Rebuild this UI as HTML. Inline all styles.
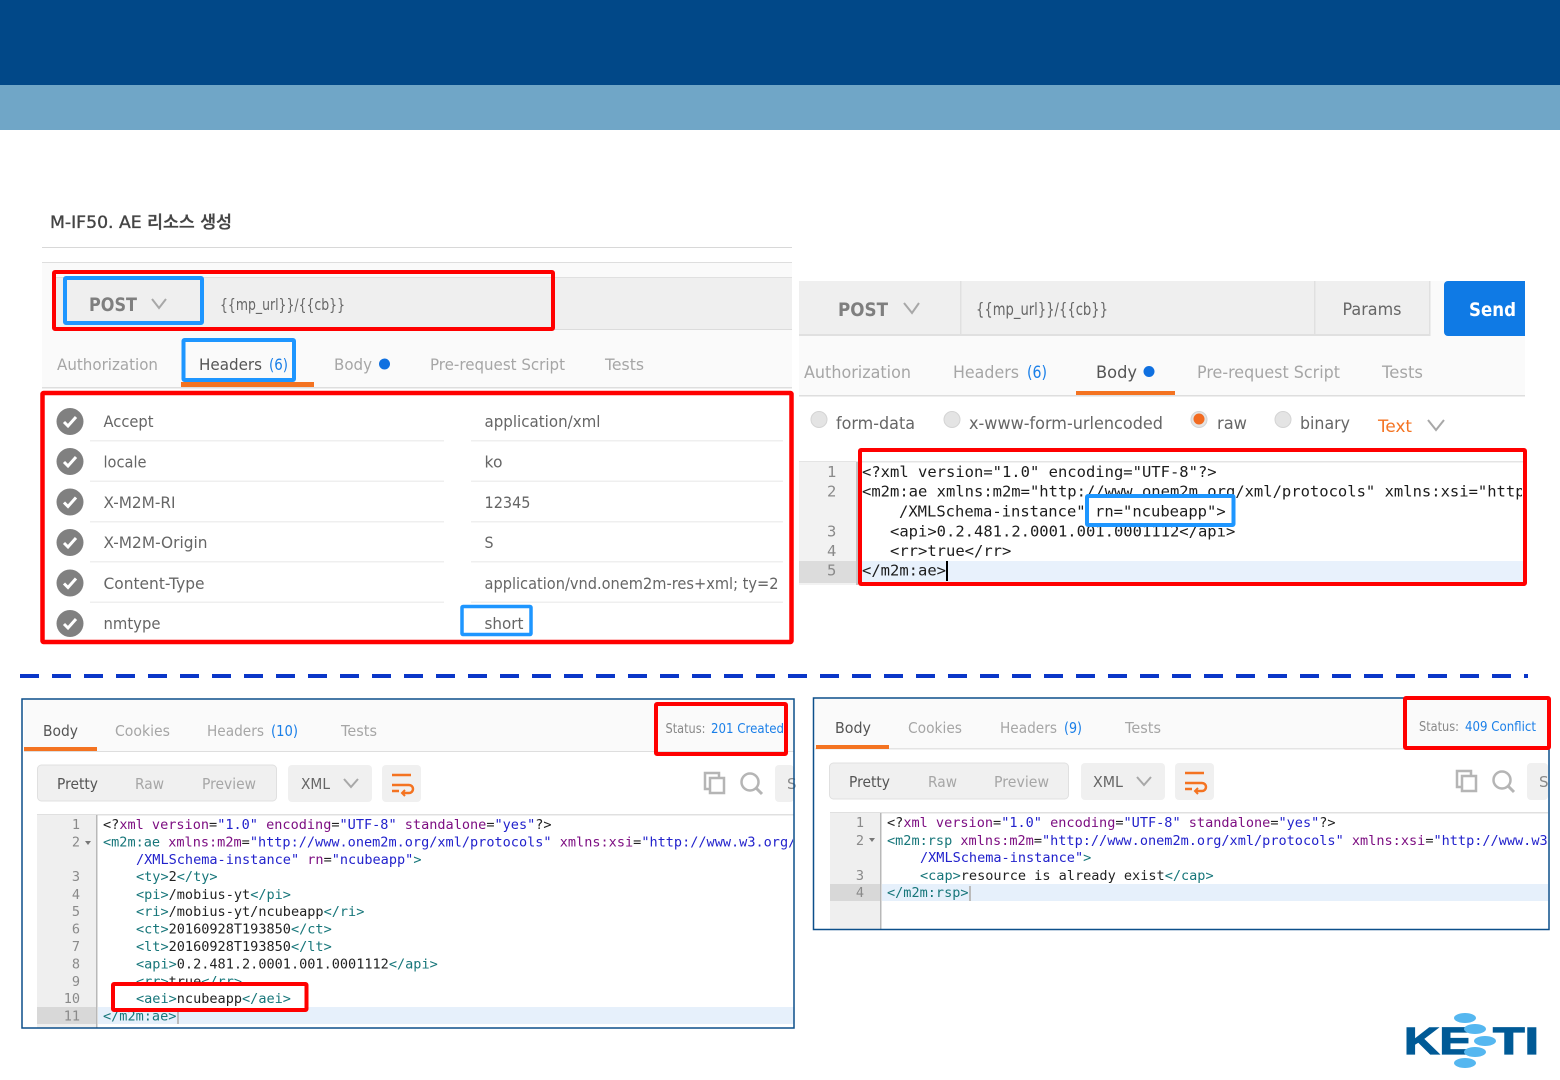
<!DOCTYPE html>
<html><head><meta charset="utf-8"><title>M-IF50</title>
<style>
html,body{margin:0;padding:0;background:#fff;width:1560px;height:1080px;overflow:hidden}
svg{display:block}
.u{font-family:"DejaVu Sans","Noto Sans CJK KR",sans-serif}
.c{font-family:"DejaVu Sans Mono","Liberation Mono",monospace;font-size:13.55px;white-space:pre}
.big{font-size:15.5px;fill:#1c1c1c}
.g{fill:#a3a3a3}.d{fill:#555}.b{fill:#1a7fe8}
.t{fill:#17767a}.a{fill:#7d0f82}.s{fill:#2222cc}.x{fill:#222}.n{fill:#8a8a8a}
.ch{fill:none;stroke:#a8a8a8;stroke-width:2}
</style></head><body>
<svg width="1560" height="1080" viewBox="0 0 1560 1080" xmlns="http://www.w3.org/2000/svg">
<defs>
<clipPath id="cr"><rect x="799" y="455" width="723" height="130"/></clipPath>
<clipPath id="cl"><rect x="22" y="760" width="771" height="267"/></clipPath>
<clipPath id="cb"><rect x="814" y="760" width="734" height="169"/></clipPath>
</defs>
<!-- header -->
<rect width="1560" height="85" fill="#014888"/>
<rect y="85" width="1560" height="45" fill="#70a6c7"/>

<!-- title -->
<text class="u" x="50" y="228" font-size="17" font-weight="500" fill="#444" stroke="#444" stroke-width="0.35" textLength="182" lengthAdjust="spacingAndGlyphs">M-IF50. AE 리소스 생성</text>
<rect x="42" y="247" width="750" height="1" fill="#d8d8d8"/>

<!-- left request panel -->
<rect x="42" y="262" width="750" height="125" fill="#fafafa"/>
<rect x="42" y="262" width="750" height="1" fill="#dedede"/>
<rect x="53" y="277" width="739" height="53" fill="#efefef"/>
<rect x="53" y="277" width="739" height="1" fill="#e0e0e0"/>
<rect x="53" y="329" width="739" height="1" fill="#dcdcdc"/>
<text class="u" x="89" y="311" font-size="19" font-weight="bold" fill="#7f7f7f" textLength="48" lengthAdjust="spacingAndGlyphs">POST</text>
<polyline class="ch" points="152,299 159,308 166,299"/>
<text class="u" x="220" y="310" font-size="16" fill="#666" textLength="125" lengthAdjust="spacingAndGlyphs">{{mp_url}}/{{cb}}</text>
<rect x="54" y="272" width="499" height="57" fill="none" stroke="#f00" stroke-width="4" rx="1"/>
<rect x="65" y="278" width="137" height="45" fill="none" stroke="#1e96ff" stroke-width="4" rx="1"/>

<text class="u" x="57" y="370" font-size="16" fill="#a6a6a6" textLength="101" lengthAdjust="spacingAndGlyphs">Authorization</text>
<text class="u" x="199" y="370" font-size="16" fill="#555" textLength="63" lengthAdjust="spacingAndGlyphs">Headers</text>
<text class="u" x="269" y="370" font-size="16" fill="#1a7fe8" textLength="19" lengthAdjust="spacingAndGlyphs">(6)</text>
<text class="u" x="334" y="370" font-size="16" fill="#a6a6a6" textLength="38" lengthAdjust="spacingAndGlyphs">Body</text>
<circle cx="384.500" cy="364" r="5.500" fill="#0f70e0"/>
<text class="u" x="430" y="370" font-size="16" fill="#a6a6a6" textLength="135" lengthAdjust="spacingAndGlyphs">Pre-request Script</text>
<text class="u" x="605" y="370" font-size="16" fill="#a6a6a6" textLength="39" lengthAdjust="spacingAndGlyphs">Tests</text>
<rect x="42" y="387" width="750" height="1.500" fill="#dedede"/>
<rect x="181" y="382" width="133" height="5" fill="#f47321"/>
<rect x="183.500" y="340" width="110.500" height="40" fill="none" stroke="#1e96ff" stroke-width="4" rx="1"/>

<!-- rows -->
<g fill="#808080">
<circle cx="70" cy="421.500" r="13.500"/><circle cx="70" cy="461.500" r="13.500"/><circle cx="70" cy="502" r="13.500"/><circle cx="70" cy="542.500" r="13.500"/><circle cx="70" cy="583" r="13.500"/><circle cx="70" cy="623.500" r="13.500"/>
</g>
<g fill="none" stroke="#fff" stroke-width="3">
<polyline points="64,422 68,426 76,417"/><polyline points="64,462 68,466 76,457"/><polyline points="64,502.500 68,506.500 76,497.500"/><polyline points="64,543 68,547 76,538"/><polyline points="64,583.500 68,587.500 76,578.500"/><polyline points="64,624 68,628 76,619"/>
</g>
<g fill="#efefef">
<rect x="90" y="440" width="354" height="1.500"/><rect x="471" y="440" width="312" height="1.500"/>
<rect x="90" y="480.500" width="354" height="1.500"/><rect x="471" y="480.500" width="312" height="1.500"/>
<rect x="90" y="521" width="354" height="1.500"/><rect x="471" y="521" width="312" height="1.500"/>
<rect x="90" y="561" width="354" height="1.500"/><rect x="471" y="561" width="312" height="1.500"/>
<rect x="90" y="601.500" width="354" height="1.500"/><rect x="471" y="601.500" width="312" height="1.500"/>
</g>
<g class="u" font-size="16" fill="#666">
<text x="103.500" y="427" textLength="50" lengthAdjust="spacingAndGlyphs">Accept</text>
<text x="103.500" y="467.500" textLength="43" lengthAdjust="spacingAndGlyphs">locale</text>
<text x="103.500" y="508" textLength="72" lengthAdjust="spacingAndGlyphs">X-M2M-RI</text>
<text x="103.500" y="548" textLength="104" lengthAdjust="spacingAndGlyphs">X-M2M-Origin</text>
<text x="103.500" y="589" textLength="101" lengthAdjust="spacingAndGlyphs">Content-Type</text>
<text x="103.500" y="629" textLength="57" lengthAdjust="spacingAndGlyphs">nmtype</text>
<text x="484.500" y="427" textLength="116" lengthAdjust="spacingAndGlyphs">application/xml</text>
<text x="484.500" y="467.500" textLength="18" lengthAdjust="spacingAndGlyphs">ko</text>
<text x="484.500" y="508" textLength="46" lengthAdjust="spacingAndGlyphs">12345</text>
<text x="484.500" y="548" textLength="9" lengthAdjust="spacingAndGlyphs">S</text>
<text x="484.500" y="589" textLength="294" lengthAdjust="spacingAndGlyphs">application/vnd.onem2m-res+xml; ty=2</text>
<text x="484.500" y="629" textLength="39" lengthAdjust="spacingAndGlyphs">short</text>
</g>
<rect x="42.500" y="393" width="749" height="249" fill="none" stroke="#f00" stroke-width="4.500" rx="1"/>
<rect x="462" y="606.500" width="69" height="28" fill="none" stroke="#1e96ff" stroke-width="3.500" rx="1"/>

<!-- right request panel -->
<rect x="799" y="281" width="726" height="115" fill="#fafafa"/>
<rect x="799" y="281" width="630" height="54" fill="#efefef"/>
<rect x="799" y="334" width="631" height="2" fill="#e0e0e0"/>
<rect x="1429" y="281" width="1.500" height="55" fill="#e0e0e0"/>
<rect x="960" y="281" width="1.500" height="54" fill="#e0e0e0"/>
<rect x="1314" y="281" width="1.500" height="54" fill="#e0e0e0"/>
<text class="u" x="838" y="316" font-size="19" font-weight="bold" fill="#7f7f7f" textLength="50" lengthAdjust="spacingAndGlyphs">POST</text>
<polyline class="ch" points="904,303 912,313 919,303"/>
<text class="u" x="976" y="315" font-size="17" fill="#666" textLength="132" lengthAdjust="spacingAndGlyphs">{{mp_url}}/{{cb}}</text>
<text class="u" x="1342.500" y="315" font-size="16.500" fill="#666" textLength="59" lengthAdjust="spacingAndGlyphs">Params</text>
<path d="M1525 281H1448a4 4 0 0 0-4 4v47a4 4 0 0 0 4 4h77z" fill="#0f7ae5"/>
<text class="u" x="1469" y="316" font-size="19" font-weight="bold" fill="#fff" textLength="47" lengthAdjust="spacingAndGlyphs">Send</text>

<text class="u" x="804" y="378" font-size="17" fill="#a6a6a6" textLength="107" lengthAdjust="spacingAndGlyphs">Authorization</text>
<text class="u" x="953" y="378" font-size="17" fill="#a6a6a6" textLength="66" lengthAdjust="spacingAndGlyphs">Headers</text>
<text class="u" x="1027" y="378" font-size="17" fill="#1a7fe8" textLength="20" lengthAdjust="spacingAndGlyphs">(6)</text>
<text class="u" x="1096" y="378" font-size="17" fill="#555" textLength="41" lengthAdjust="spacingAndGlyphs">Body</text>
<circle cx="1149" cy="371.500" r="5.500" fill="#0f70e0"/>
<text class="u" x="1197" y="378" font-size="17" fill="#a6a6a6" textLength="143" lengthAdjust="spacingAndGlyphs">Pre-request Script</text>
<text class="u" x="1382" y="378" font-size="17" fill="#a6a6a6" textLength="41" lengthAdjust="spacingAndGlyphs">Tests</text>
<rect x="799" y="395" width="726" height="1.500" fill="#dedede"/>
<rect x="1076" y="391" width="99" height="4" fill="#f47321"/>

<g fill="#e4e4e4" stroke="#d4d4d4"><circle cx="819" cy="419.500" r="8"/><circle cx="952" cy="419.500" r="8"/><circle cx="1199" cy="419.500" r="8"/><circle cx="1283" cy="419.500" r="8"/></g>
<circle cx="1199" cy="419" r="5.500" fill="#f26b21"/>
<g class="u" font-size="17" fill="#666">
<text x="836" y="429" textLength="79" lengthAdjust="spacingAndGlyphs">form-data</text>
<text x="969" y="429" textLength="194" lengthAdjust="spacingAndGlyphs">x-www-form-urlencoded</text>
<text x="1217" y="429" textLength="30" lengthAdjust="spacingAndGlyphs">raw</text>
<text x="1300" y="429" textLength="50" lengthAdjust="spacingAndGlyphs">binary</text>
</g>
<text class="u" x="1378" y="432" font-size="17" fill="#f47321" textLength="34" lengthAdjust="spacingAndGlyphs">Text</text>
<polyline class="ch" points="1428,420 1436,430 1444,420"/>

<!-- right editor -->
<rect x="799" y="461" width="726" height="1.500" fill="#e4e4e4"/>
<rect x="799" y="462" width="57" height="123" fill="#f2f2f2"/>
<rect x="856" y="462" width="2" height="123" fill="#c4c4c4"/>
<rect x="799" y="561" width="57" height="22" fill="#dcdcdc"/>
<rect x="860" y="561" width="664" height="21" fill="#e8f1fc"/>
<g class="c big" clip-path="url(#cr)">
<text x="862" y="477">&lt;?xml version="1.0" encoding="UTF-8"?&gt;</text>
<text x="862" y="496.500">&lt;m2m:ae xmlns:m2m="http://www.onem2m.org/xml/protocols" xmlns:xsi="http://www.w3.org/2001</text>
<text x="899" y="516.500">/XMLSchema-instance"</text>
<text x="890" y="536.500">&lt;api&gt;0.2.481.2.0001.001.0001112&lt;/api&gt;</text>
<text x="890" y="556">&lt;rr&gt;true&lt;/rr&gt;</text>
<text x="862" y="575.500">&lt;/m2m:ae&gt;</text>
</g>
<g class="c" style="font-size:15.5px" fill="#8a8a8a">
<text x="827" y="477">1</text><text x="827" y="496.500">2</text><text x="827" y="536.500">3</text><text x="827" y="556">4</text><text x="827" y="575.500">5</text>
</g>
<rect x="946" y="561" width="2" height="20" fill="#000"/>
<rect x="1087" y="496" width="146.500" height="29" fill="#fff" stroke="#1e96ff" stroke-width="4" rx="1"/>
<text class="c big" x="1095" y="516.500">rn="ncubeapp"&gt;</text>
<rect x="860" y="450" width="665" height="134" fill="none" stroke="#f00" stroke-width="4" rx="1"/>

<!-- dashed -->
<line x1="20" y1="676" x2="1528" y2="676" stroke="#0a36c8" stroke-width="4" stroke-dasharray="19 13"/>

<!-- bottom-left -->
<rect x="24" y="700" width="770" height="51" fill="#fafafa"/>
<rect x="24" y="751" width="770" height="1" fill="#dedede"/>
<rect x="24" y="747" width="73" height="4" fill="#f47321"/>
<g class="u" font-size="15" fill="#a6a6a6">
<text x="43" y="736" fill="#555" textLength="35" lengthAdjust="spacingAndGlyphs">Body</text>
<text x="115" y="736" textLength="55" lengthAdjust="spacingAndGlyphs">Cookies</text>
<text x="207" y="736" textLength="57" lengthAdjust="spacingAndGlyphs">Headers</text>
<text x="271" y="736" fill="#1a7fe8" textLength="27" lengthAdjust="spacingAndGlyphs">(10)</text>
<text x="341" y="736" textLength="36" lengthAdjust="spacingAndGlyphs">Tests</text>
</g>
<text class="u" x="665.500" y="733" font-size="13" fill="#888" textLength="40" lengthAdjust="spacingAndGlyphs">Status:</text>
<text class="u" x="711" y="733" font-size="13" fill="#1a7fe8" textLength="73" lengthAdjust="spacingAndGlyphs">201 Created</text>
<rect x="37.500" y="765" width="239" height="36" rx="4" fill="#f0f0f0" stroke="#e0e0e0"/>
<rect x="288" y="765" width="84" height="37" rx="4" fill="#f0f0f0"/>
<rect x="382" y="765" width="39" height="37" rx="4" fill="#f0f0f0"/>
<rect x="775" y="765" width="19" height="37" rx="4" fill="#f0f0f0"/>
<g class="u" font-size="15" fill="#a6a6a6">
<text x="57" y="789" fill="#555" textLength="41" lengthAdjust="spacingAndGlyphs">Pretty</text>
<text x="135" y="789" textLength="29" lengthAdjust="spacingAndGlyphs">Raw</text>
<text x="202" y="789" textLength="54" lengthAdjust="spacingAndGlyphs">Preview</text>
<text x="301" y="789" fill="#666" textLength="29" lengthAdjust="spacingAndGlyphs">XML</text>
<text x="787" y="789" fill="#888">S</text>
</g>
<polyline class="ch" points="344,779 351,787 358,779"/>
<g fill="none" stroke="#f47321" stroke-width="2.500">
<path d="M392 775H411M392 785H409a4 4 0 0 1 0 8H403M392 791H399"/>
<path d="M405 790L402 793L405 796" stroke-width="2"/>
</g>
<g fill="none" stroke="#b5b5b5" stroke-width="2.500">
<path d="M711 789H705V773H719V778"/><rect x="710" y="778" width="14" height="15" fill="#fff"/>
<circle cx="750" cy="782" r="8.500"/><path d="M756 788L762 794" stroke-width="3"/>
</g>
<rect x="37" y="814" width="757" height="1.500" fill="#e0e0e0"/>
<rect x="37" y="815" width="59" height="213" fill="#efefef"/>
<rect x="96" y="815" width="1.500" height="213" fill="#b8b8b8"/>
<rect x="37" y="1007" width="59" height="17" fill="#d8d8d8"/>
<rect x="98" y="1007" width="696" height="17" fill="#e6f0fb"/>
<g class="c" clip-path="url(#cl)">
<text x="103" y="829"><tspan class="x">&lt;?</tspan><tspan class="a">xml version</tspan><tspan class="x">=</tspan><tspan class="s">"1.0"</tspan> <tspan class="a">encoding</tspan><tspan class="x">=</tspan><tspan class="s">"UTF-8"</tspan> <tspan class="a">standalone</tspan><tspan class="x">=</tspan><tspan class="s">"yes"</tspan><tspan class="x">?&gt;</tspan></text>
<text x="103" y="846.500"><tspan class="t">&lt;m2m:ae</tspan> <tspan class="a">xmlns:m2m</tspan><tspan class="x">=</tspan><tspan class="s">"http://www.onem2m.org/xml/protocols"</tspan> <tspan class="a">xmlns:xsi</tspan><tspan class="x">=</tspan><tspan class="s">"http://www.w3.org/2001</tspan></text>
<text x="136" y="864"><tspan class="s">/XMLSchema-instance"</tspan> <tspan class="a">rn</tspan><tspan class="x">=</tspan><tspan class="s">"ncubeapp"</tspan><tspan class="t">&gt;</tspan></text>
<text x="136" y="881"><tspan class="t">&lt;ty&gt;</tspan><tspan class="x">2</tspan><tspan class="t">&lt;/ty&gt;</tspan></text>
<text x="136" y="899"><tspan class="t">&lt;pi&gt;</tspan><tspan class="x">/mobius-yt</tspan><tspan class="t">&lt;/pi&gt;</tspan></text>
<text x="136" y="916"><tspan class="t">&lt;ri&gt;</tspan><tspan class="x">/mobius-yt/ncubeapp</tspan><tspan class="t">&lt;/ri&gt;</tspan></text>
<text x="136" y="933.500"><tspan class="t">&lt;ct&gt;</tspan><tspan class="x">20160928T193850</tspan><tspan class="t">&lt;/ct&gt;</tspan></text>
<text x="136" y="951"><tspan class="t">&lt;lt&gt;</tspan><tspan class="x">20160928T193850</tspan><tspan class="t">&lt;/lt&gt;</tspan></text>
<text x="136" y="968.500"><tspan class="t">&lt;api&gt;</tspan><tspan class="x">0.2.481.2.0001.001.0001112</tspan><tspan class="t">&lt;/api&gt;</tspan></text>
<text x="136" y="986"><tspan class="t">&lt;rr&gt;</tspan><tspan class="x">true</tspan><tspan class="t">&lt;/rr&gt;</tspan></text>
<text x="103" y="1020.500"><tspan class="t">&lt;/m2m:ae&gt;</tspan></text>
</g>
<g class="c n" text-anchor="end">
<text x="80" y="829">1</text><text x="80" y="846.500">2</text><text x="80" y="881">3</text><text x="80" y="899">4</text><text x="80" y="916">5</text><text x="80" y="933.500">6</text><text x="80" y="951">7</text><text x="80" y="968.500">8</text><text x="80" y="986">9</text><text x="80" y="1003">10</text><text x="80" y="1020.500">11</text>
</g>
<path d="M85 841h6l-3 4z" fill="#777"/>
<rect x="177" y="1009" width="2" height="15" fill="#bbb"/>
<rect x="113" y="984" width="193.500" height="26" fill="#fff" stroke="#f00" stroke-width="4" rx="1"/>
<text class="c" x="136" y="1003"><tspan class="t">&lt;aei&gt;</tspan><tspan class="x">ncubeapp</tspan><tspan class="t">&lt;/aei&gt;</tspan></text>
<rect x="656" y="704" width="130" height="50" fill="none" stroke="#f00" stroke-width="4" rx="1"/>
<rect x="22" y="699" width="772" height="329" fill="none" stroke="#0c4f8a" stroke-width="1.500"/>

<!-- bottom-right -->
<rect x="815" y="699" width="733" height="49" fill="#fafafa"/>
<rect x="815" y="748" width="733" height="1.500" fill="#e4e4e4"/>
<rect x="816" y="745" width="73" height="4" fill="#f47321"/>
<g class="u" font-size="15" fill="#a6a6a6">
<text x="835" y="733" fill="#555" textLength="36" lengthAdjust="spacingAndGlyphs">Body</text>
<text x="908" y="733" textLength="54" lengthAdjust="spacingAndGlyphs">Cookies</text>
<text x="1000" y="733" textLength="57" lengthAdjust="spacingAndGlyphs">Headers</text>
<text x="1064" y="733" fill="#1a7fe8" textLength="18" lengthAdjust="spacingAndGlyphs">(9)</text>
<text x="1125" y="733" textLength="36" lengthAdjust="spacingAndGlyphs">Tests</text>
</g>
<text class="u" x="1419" y="731" font-size="13" fill="#888" textLength="40" lengthAdjust="spacingAndGlyphs">Status:</text>
<text class="u" x="1465" y="731" font-size="13" fill="#1a7fe8" textLength="71" lengthAdjust="spacingAndGlyphs">409 Conflict</text>
<rect x="829.500" y="763" width="239" height="36" rx="4" fill="#f0f0f0" stroke="#e0e0e0"/>
<rect x="1081" y="763" width="84" height="37" rx="4" fill="#f0f0f0"/>
<rect x="1175" y="763" width="39" height="37" rx="4" fill="#f0f0f0"/>
<rect x="1527" y="763" width="21" height="37" rx="4" fill="#f0f0f0"/>
<g class="u" font-size="15" fill="#a6a6a6">
<text x="849" y="787" fill="#555" textLength="41" lengthAdjust="spacingAndGlyphs">Pretty</text>
<text x="928" y="787" textLength="29" lengthAdjust="spacingAndGlyphs">Raw</text>
<text x="994" y="787" textLength="55" lengthAdjust="spacingAndGlyphs">Preview</text>
<text x="1093" y="787" fill="#666" textLength="30" lengthAdjust="spacingAndGlyphs">XML</text>
<text x="1539" y="787" fill="#888">S</text>
</g>
<polyline class="ch" points="1137,777 1144,785 1151,777"/>
<g fill="none" stroke="#f47321" stroke-width="2.500">
<path d="M1185 773H1204M1185 783H1202a4 4 0 0 1 0 8H1196M1185 789H1192"/>
<path d="M1198 788L1195 791L1198 794" stroke-width="2"/>
</g>
<g fill="none" stroke="#b5b5b5" stroke-width="2.500">
<path d="M1463 787H1457V771H1471V776"/><rect x="1462" y="776" width="14" height="15" fill="#fff"/>
<circle cx="1502" cy="780" r="8.500"/><path d="M1508 786L1514 792" stroke-width="3"/>
</g>
<rect x="830" y="812" width="718" height="1.500" fill="#e0e0e0"/>
<rect x="830" y="813" width="50" height="116" fill="#efefef"/>
<rect x="880" y="813" width="1.500" height="116" fill="#b8b8b8"/>
<rect x="830" y="884" width="50" height="17" fill="#d8d8d8"/>
<rect x="882" y="884" width="666" height="17" fill="#e6f0fb"/>
<g class="c" clip-path="url(#cb)">
<text x="887" y="827"><tspan class="x">&lt;?</tspan><tspan class="a">xml version</tspan><tspan class="x">=</tspan><tspan class="s">"1.0"</tspan> <tspan class="a">encoding</tspan><tspan class="x">=</tspan><tspan class="s">"UTF-8"</tspan> <tspan class="a">standalone</tspan><tspan class="x">=</tspan><tspan class="s">"yes"</tspan><tspan class="x">?&gt;</tspan></text>
<text x="887" y="845"><tspan class="t">&lt;m2m:rsp</tspan> <tspan class="a">xmlns:m2m</tspan><tspan class="x">=</tspan><tspan class="s">"http://www.onem2m.org/xml/protocols"</tspan> <tspan class="a">xmlns:xsi</tspan><tspan class="x">=</tspan><tspan class="s">"http://www.w3.org/2001</tspan></text>
<text x="920" y="862"><tspan class="s">/XMLSchema-instance"</tspan><tspan class="t">&gt;</tspan></text>
<text x="920" y="880"><tspan class="t">&lt;cap&gt;</tspan><tspan class="x">resource is already exist</tspan><tspan class="t">&lt;/cap&gt;</tspan></text>
<text x="887" y="897"><tspan class="t">&lt;/m2m:rsp&gt;</tspan></text>
</g>
<g class="c n" text-anchor="end">
<text x="864" y="827">1</text><text x="864" y="845">2</text><text x="864" y="880">3</text><text x="864" y="897">4</text>
</g>
<path d="M869 838h6l-3 4z" fill="#777"/>
<rect x="969" y="886" width="2" height="15" fill="#bbb"/>
<rect x="813.500" y="698" width="735.500" height="231.500" fill="none" stroke="#0c4f8a" stroke-width="1.500"/>
<rect x="1405" y="698" width="144" height="50" fill="none" stroke="#f00" stroke-width="4" rx="1"/>

<!-- logo -->
<text x="1404" y="1054" font-family="'Liberation Sans',sans-serif" font-weight="bold" font-size="38" fill="#005a96" stroke="#005a96" stroke-width="1.200" textLength="68" lengthAdjust="spacingAndGlyphs">KE</text>
<text x="1493" y="1054" font-family="'Liberation Sans',sans-serif" font-weight="bold" font-size="38" fill="#005a96" stroke="#005a96" stroke-width="1.200" textLength="46" lengthAdjust="spacingAndGlyphs">TI</text>
<g fill="#55b7f0">
<ellipse cx="1465" cy="1018" rx="11" ry="5"/><ellipse cx="1475" cy="1029" rx="11" ry="5"/><ellipse cx="1485" cy="1041" rx="11" ry="5"/><ellipse cx="1475" cy="1052" rx="11" ry="5"/><ellipse cx="1465" cy="1063" rx="11" ry="5"/>
</g>
</svg>
</body></html>
